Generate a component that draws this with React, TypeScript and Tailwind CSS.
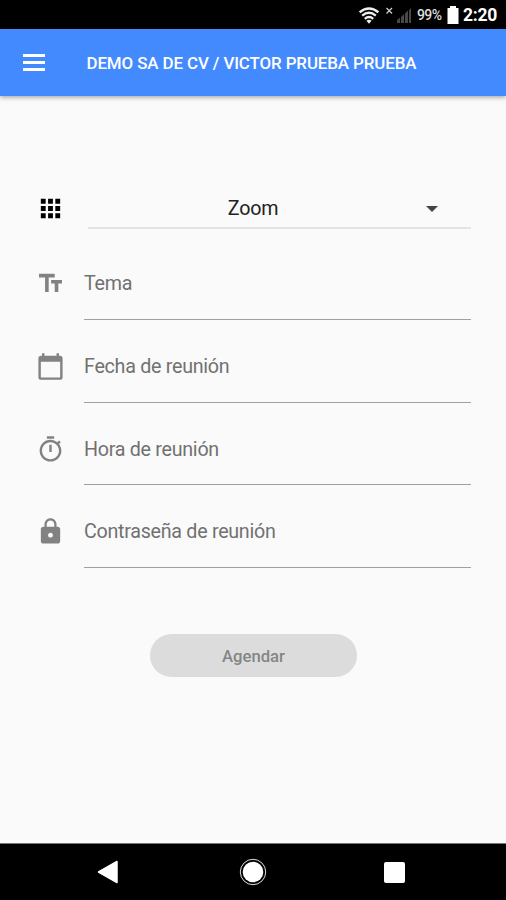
const icons = {
  apps: 'M4 8h4V4H4v4zm6 12h4v-4h-4v4zm-6 0h4v-4H4v4zm0-6h4v-4H4v4zm6 0h4v-4h-4v4zm6-10v4h4V4h-4zm-6 4h4V4h-4v4zm6 6h4v-4h-4v4zm0 6h4v-4h-4v4z',
  text: 'M2.5 4v3h5v12h3V7h5V4h-13zm19 5h-9v3h3v7h3v-7h3V9z',
  calendar:
    'M20 3h-1V1h-2v2H7V1H5v2H4c-1.1 0-2 .9-2 2v16c0 1.1.9 2 2 2h16c1.1 0 2-.9 2-2V5c0-1.1-.9-2-2-2zm0 18H4V8h16v13z',
  timer:
    'M15 1H9v2h6V1zm-4 13h2V8h-2v6zm8.03-6.61l1.42-1.42c-.43-.51-.9-.99-1.41-1.41l-1.42 1.42C16.07 4.74 14.12 4 12 4c-4.97 0-9 4.03-9 9s4.02 9 9 9 9-4.03 9-9c0-2.12-.74-4.07-1.97-5.61zM12 20c-3.87 0-7-3.13-7-7s3.13-7 7-7 7 3.13 7 7-3.13 7-7 7z',
  lock: 'M18 8h-1V6c0-2.76-2.24-5-5-5S7 3.24 7 6v2H6c-1.1 0-2 .9-2 2v10c0 1.1.9 2 2 2h12c1.1 0 2-.9 2-2V10c0-1.1-.9-2-2-2zm-6 9c-1.1 0-2-.9-2-2s.9-2 2-2 2 .9 2 2-.9 2-2 2zm3.1-9H8.9V6c0-1.71 1.39-3.1 3.1-3.1 1.71 0 3.1 1.39 3.1 3.1v2z',
}

const fields: { label: string; icon: keyof typeof icons }[] = [
  { label: 'Tema', icon: 'text' },
  { label: 'Fecha de reunión', icon: 'calendar' },
  { label: 'Hora de reunión', icon: 'timer' },
  { label: 'Contraseña de reunión', icon: 'lock' },
]

function Icon({ name, className }: { name: keyof typeof icons; className: string }) {
  return (
    <svg viewBox="0 0 24 24" className={`size-[29px] shrink-0 fill-current ${className}`}>
      <path d={icons[name]} />
    </svg>
  )
}

function StatusBar() {
  return (
    <div className="flex h-[29px] shrink-0 items-center justify-end bg-black pt-px pr-[9px] text-white">
      <svg viewBox="0 0 20 17" className="h-[17px] w-5" fill="none" stroke="#eee" strokeWidth="2.4">
        <path d="M.6 5.200Q10-2.400 19.400 5.200M3.200 8.600Q10 3 16.800 8.600M5.800 11.800Q10 8.200 14.200 11.800" />
        <path d="M7.400 13.800Q10 11.600 12.600 13.800L10 16.800Z" fill="#eee" stroke="none" />
      </svg>
      <svg viewBox="0 0 28 18" className="ml-[6px] h-[18px] w-7">
        <path d="M1.500 2l5.500 5.500M7 2L1.500 7.500" stroke="#ccc" strokeWidth="1.3" />
        <path d="M12 17v-3l3-2.500V17zM16 17v-6l3-3v9zM20 17V7.500l3-3V17zM24 17V4l2-2v15z" transform="translate(0 0)" fill="#484848" />
      </svg>
      <span className="ml-[4px] w-[28px] text-[14px] leading-none font-medium tracking-[-0.6px] text-[#ddd]">99%</span>
      <svg viewBox="0 0 12 18" className="ml-[2px] h-[18px] w-3">
        <path d="M3 0h6v2h2.500v16H.5V2H3z" fill="white" />
      </svg>
      <span className="ml-1 w-[34px] pt-[2px] text-[17.500px] leading-none font-bold tracking-[-0.25px]">2:20</span>
    </div>
  )
}

function NavigationBar() {
  return (
    <nav className="flex h-[57px] shrink-0 items-center justify-between border-t border-[#777] bg-black pr-[101px] pl-[97px]">
      <svg viewBox="0 0 22 24" className="h-6 w-[22px]">
        <path d="M1.500 12L20 1.500v21z" fill="white" stroke="white" strokeWidth="1.500" strokeLinejoin="round" />
      </svg>
      <svg viewBox="0 0 28 28" className="ml-[3px] size-7">
        <circle cx="14" cy="14" r="10.300" fill="white" />
        <circle cx="14" cy="14" r="12.700" fill="none" stroke="#ddd" strokeWidth="1" />
      </svg>
      <div className="size-[21px] rounded-[2px] bg-white" />
    </nav>
  )
}

export default function App() {
  return (
    <div className="flex h-[900px] w-[506px] flex-col overflow-hidden bg-[#fafafa] font-[Roboto,sans-serif]">
      <StatusBar />
      <header className="z-10 flex h-[67px] shrink-0 items-center bg-[#448aff] pl-[23px] text-white shadow-[0_1px_5px_rgba(0,0,0,0.4)]">
        <div className="flex w-[22px] flex-col gap-1">
          <div className="h-[3px] bg-white" />
          <div className="h-[3px] bg-white" />
          <div className="h-[3px] bg-white" />
        </div>
        <h1 className="ml-[41.500px] pt-[2px] text-[16.9px] font-medium tracking-[-0.1px] whitespace-nowrap">
          DEMO SA DE CV / VICTOR PRUEBA PRUEBA
        </h1>
      </header>
      <main className="flex flex-1 flex-col pt-[92px] pr-[35px] pl-[36px]">
        <div className="flex h-[41px]">
          <Icon name="apps" className="mt-[6px] text-black" />
          <div className="ml-[23px] flex flex-1 items-center border-b-2 border-[#e4e4e4] pt-[2px]">
            <span className="flex-1 pr-[8px] text-center text-[19.7px] tracking-[-0.25px] text-[#222]">Zoom</span>
            <svg viewBox="0 0 12 6" className="mr-[33px] h-[6px] w-3">
              <path d="M0 0h12L6 6z" fill="#444" />
            </svg>
          </div>
        </div>
        <div className="mt-[8.400px] flex flex-col">
          {fields.map(({ label, icon }) => (
            <div key={label} className="flex h-[82.6px]">
              <Icon name={icon} className="mt-[32px] text-[#828282]" />
              <div className="ml-[19px] flex-1 border-b-[1.500px] border-[#a0a0a0] pt-[33px] text-[19.7px] leading-7 tracking-[-0.28px] text-[#717171]">
                {label}
              </div>
            </div>
          ))}
        </div>
        <button className="mt-[66.600px] ml-[114px] h-[43px] w-[207px] rounded-full bg-[#dcdcdc] pt-px text-[16.7px] font-medium text-[#858585]">
          Agendar
        </button>
      </main>
      <NavigationBar />
    </div>
  )
}
